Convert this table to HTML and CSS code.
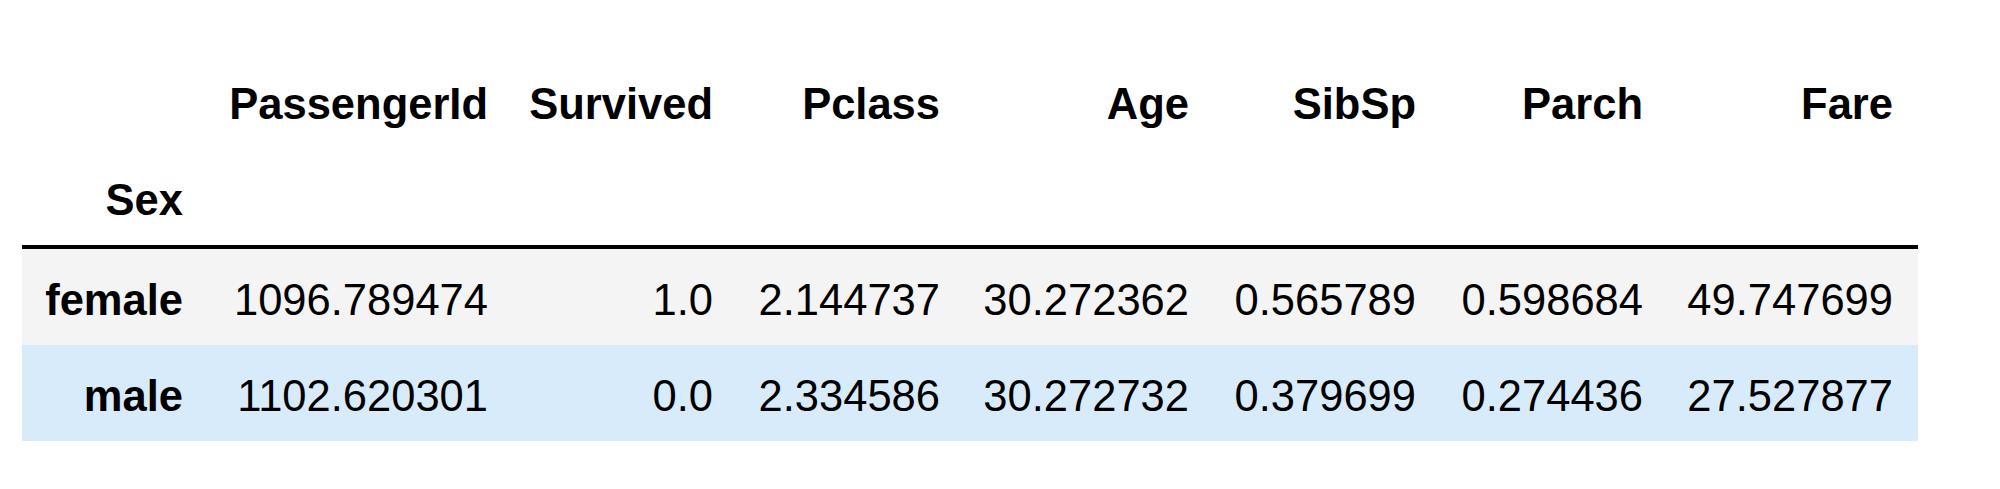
FILE: index.html
```html
<!DOCTYPE html>
<html>
<head>
<meta charset="utf-8">
<link rel="stylesheet" href="styles.css">
</head>
<body>
<div class="output">
  <table class="dataframe">
    <colgroup>
      <col class="c-index">
      <col class="c-pid">
      <col class="c-surv">
      <col class="c-pclass">
      <col class="c-age">
      <col class="c-sibsp">
      <col class="c-parch">
      <col class="c-fare">
    </colgroup>
    <thead>
      <tr class="cols">
        <th></th>
        <th>PassengerId</th>
        <th>Survived</th>
        <th>Pclass</th>
        <th>Age</th>
        <th>SibSp</th>
        <th>Parch</th>
        <th>Fare</th>
      </tr>
      <tr class="index-name">
        <th>Sex</th>
        <th></th>
        <th></th>
        <th></th>
        <th></th>
        <th></th>
        <th></th>
        <th></th>
      </tr>
    </thead>
    <tbody>
      <tr class="row-odd">
        <th>female</th>
        <td>1096.789474</td>
        <td>1.0</td>
        <td>2.144737</td>
        <td>30.272362</td>
        <td>0.565789</td>
        <td>0.598684</td>
        <td>49.747699</td>
      </tr>
      <tr class="row-hover">
        <th>male</th>
        <td>1102.620301</td>
        <td>0.0</td>
        <td>2.334586</td>
        <td>30.272732</td>
        <td>0.379699</td>
        <td>0.274436</td>
        <td>27.527877</td>
      </tr>
    </tbody>
  </table>
</div>
</body>
</html>
```

FILE: styles.css
```css
html, body {
  margin: 0;
  padding: 0;
  background: #ffffff;
}

.output {
  padding: 53px 0 0 22px;
}

.dataframe {
  border-collapse: collapse;
  border-spacing: 0;
  table-layout: fixed;
  width: 1896px;
  font-family: "Liberation Sans", Arial, Helvetica, sans-serif;
  font-size: 43.5px;
  color: #000;
}

.c-index { width: 186px; }
.c-pid { width: 305px; }
.c-surv { width: 225px; }
.c-pclass { width: 227px; }
.c-age { width: 249px; }
.c-sibsp { width: 227px; }
.c-parch { width: 227px; }
.c-fare { width: 250px; }

.dataframe th,
.dataframe td {
  text-align: right;
  vertical-align: middle;
  padding: 24.5px 25px 19px 0;
  line-height: 52.5px;
  white-space: nowrap;
  overflow: visible;
  border: none;
}

.dataframe th {
  font-weight: bold;
}

.dataframe td {
  font-weight: normal;
}

.dataframe thead {
  border-bottom: 4px solid #000;
}

.row-odd {
  background: #f4f4f4;
}

.row-hover {
  background: #d7ebfb;
}
```
